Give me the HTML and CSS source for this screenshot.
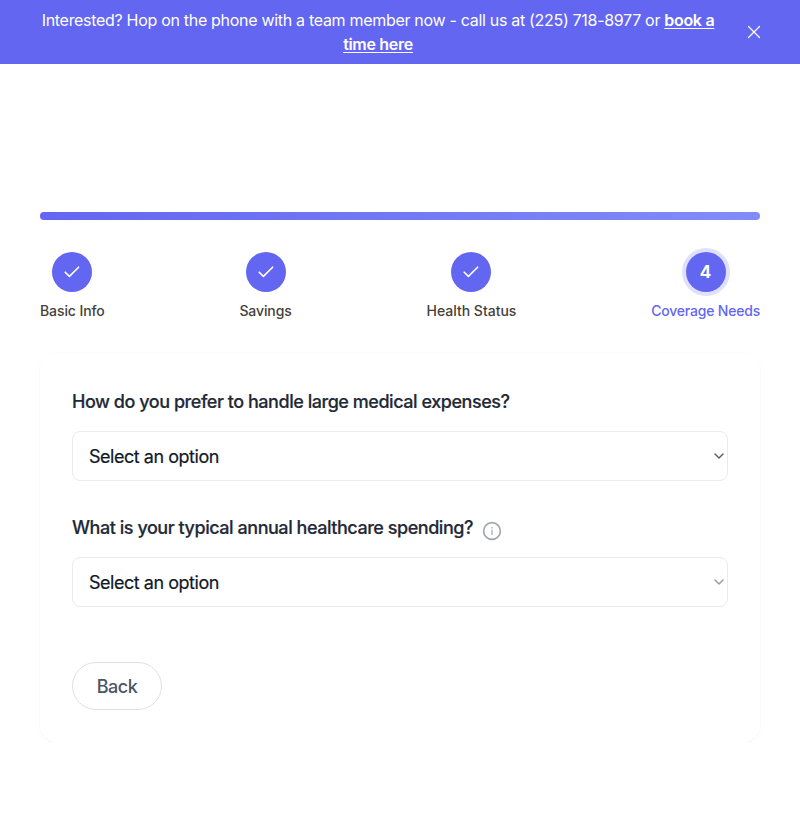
FILE: index.html
```html
<!DOCTYPE html>
<html lang="en">
<head>
<meta charset="utf-8">
<title>Coverage Needs</title>
<link rel="stylesheet" href="styles.css">
</head>
<body>
<header class="banner">
  <p class="banner-text">Interested? Hop on the phone with a team member now - call us at (225) 718-8977 or <a href="#">book a<br>time here</a></p>
  <button class="close" aria-label="Close"><svg width="14" height="14" viewBox="0 0 14 14"><path d="M1.5 1.5l11 11M12.5 1.5l-11 11"/></svg></button>
</header>
<main class="page">
  <div class="progress"></div>
  <ol class="steps">
    <li class="step"><span class="dot"><svg width="20" height="20" viewBox="0 0 20 20"><path d="M3.2 10.2l4.2 4.2 9.2-9.2"/></svg></span><span class="label basic">Basic Info</span></li>
    <li class="step"><span class="dot"><svg width="20" height="20" viewBox="0 0 20 20"><path d="M3.2 10.2l4.2 4.2 9.2-9.2"/></svg></span><span class="label basic">Savings</span></li>
    <li class="step"><span class="dot"><svg width="20" height="20" viewBox="0 0 20 20"><path d="M3.2 10.2l4.2 4.2 9.2-9.2"/></svg></span><span class="label">Health Status</span></li>
    <li class="step active"><span class="dot">4</span><span class="label">Coverage Needs</span></li>
  </ol>
  <section class="card">
    <div class="question">How do you prefer to handle large medical expenses?</div>
    <div class="select"><span>Select an option</span><svg width="10" height="7" viewBox="0 0 10 7"><path d="M1 1l4 4 4-4"/></svg></div>
    <div class="question second"><span>What is your typical annual healthcare spending?</span><svg class="info" width="20" height="20" viewBox="0 0 20 20"><circle cx="10" cy="10" r="8.4"/><path class="mark" d="M10 9v4.5M10 6.4v.6"/></svg></div>
    <div class="select light"><span>Select an option</span><svg width="10" height="7" viewBox="0 0 10 7"><path d="M1 1l4 4 4-4"/></svg></div>
    <button class="back">Back</button>
  </section>
</main>
</body>
</html>
```
FILE: styles.css
```css
* { box-sizing: border-box; }
body { margin: 0; background: #fff; font-family: Inter, "Liberation Sans", sans-serif; color: #1f2937; }
svg { fill: none; stroke: currentColor; stroke-linecap: round; stroke-linejoin: round; flex: none; }
.banner { height: 64px; background: #6366f1; color: #fff; display: flex; align-items: center; padding-right: 39px; }
.banner-text { flex: 1; margin: 0; padding-left: 9px; font-size: 16px; line-height: 24px; text-align: center; white-space: nowrap; letter-spacing: -0.305px; }
.banner a { color: inherit; font-weight: 600; text-underline-offset: 2px; }
.close { border: 0; background: none; padding: 0; width: 14px; height: 14px; color: inherit; }
.close svg { display: block; stroke-width: 1.3; }
.page { padding: 148px 40px 0; }
.progress { height: 8px; border-radius: 4px; background: linear-gradient(90deg, #6366f1, #818cf8); }
.steps { list-style: none; margin: 32px 0 0; padding: 0; display: flex; justify-content: space-between; }
.step { display: flex; flex-direction: column; align-items: center; }
.dot { width: 40px; height: 40px; border-radius: 50%; background: #6366f1; color: #fff; display: flex; align-items: center; justify-content: center; font-weight: 700; font-size: 17px; }
.dot svg { stroke-width: 1.6; }
.label { margin-top: 8px; font-size: 14px; line-height: 22px; font-weight: 500; color: #44403c; white-space: nowrap; }
.basic { letter-spacing: -0.1px; }
.active .dot { box-shadow: 0 0 0 4px #e0e0fc; }
.active .label { color: #6366f1; letter-spacing: -0.2px; }
.card { margin-top: 31px; height: 389px; border-radius: 16px; padding: 33px 32px 32px; box-shadow: 0 0 0 1px rgba(0,0,0,.012), 0 1px 2px rgba(0,0,0,.04); }
.question { display: flex; height: 29px; line-height: 31px; font-size: 18px; font-weight: 500; white-space: nowrap; letter-spacing: -0.46px; -webkit-text-stroke: .2px currentColor; }
.second { margin-top: 32px; line-height: 29px; }
.info { margin: 8px 0 0 9px; color: #a0a5b0; stroke-width: 1.6; }
.mark { stroke-width: 1.2; }
.select { margin-top: 16px; height: 50px; border: 1.5px solid #e9ebed; border-radius: 8px; padding: 0 3px 0 16px; display: flex; align-items: center; justify-content: space-between; font-size: 18px; letter-spacing: -0.47px; color: #111827; -webkit-text-stroke: .2px currentColor; }
.select svg { stroke-width: 1.5; color: #5c6068; }
.second + .light { margin-top: 15px; }
.light svg { color: #989ba3; }
.back { display: block; margin-top: 55px; width: 90px; height: 48px; border: 1.5px solid #dfe1e6; border-radius: 24px; background: #fff; color: #4b5563; font: 500 18px Inter, sans-serif; letter-spacing: -0.5px; padding: 0; }
```
